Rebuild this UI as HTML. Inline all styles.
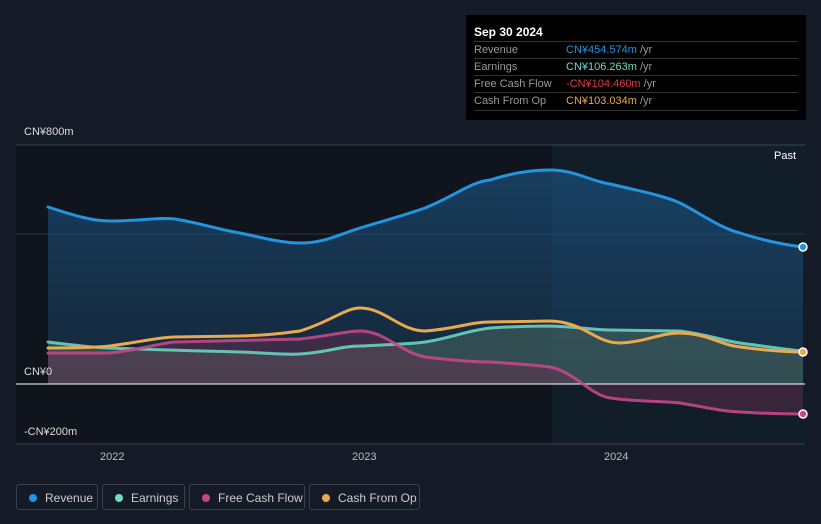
<!DOCTYPE html>
<html><head><style>
body{margin:0;width:821px;height:524px;background:#151b26;font-family:"Liberation Sans",sans-serif;overflow:hidden;position:relative}
.tt{position:absolute;left:466px;top:15px;width:340px;height:105px;background:#000;color:#fff}
.tt .h{position:absolute;left:8px;top:10px;font-size:12px;font-weight:bold}
.row{position:absolute;left:8px;width:324px;height:17px;border-top:1px solid #333;font-size:11px;color:#999;line-height:17px}
.row span{position:absolute;left:92px}
.lg{position:absolute;top:484px;height:26px;border:1px solid #3a404c;border-radius:3px;color:#ccc;font-size:12px;line-height:26px;box-sizing:border-box}
.lg i{position:absolute;left:12px;top:9px;width:8px;height:8px;border-radius:50%}
.lg b{font-weight:normal;position:absolute;left:28px}
.ax{position:absolute;font-size:11px;color:#ddd}
</style></head><body>
<svg width="821" height="524" style="position:absolute;left:0;top:0">
<defs><linearGradient id="g" x1="0" y1="0" x2="0" y2="1"><stop offset="0" stop-color="#1c5a8c" stop-opacity=".6"/><stop offset="1" stop-color="#1c4a70" stop-opacity=".35"/></linearGradient></defs>
<rect x="16" y="145" width="536" height="299" fill="#10141c"/>
<rect x="552" y="145" width="253" height="299" fill="#121d2a"/>
<line x1="16" y1="145" x2="805" y2="145" stroke="#3a4250"/>
<line x1="16" y1="234" x2="805" y2="234" stroke="#2c3442"/>
<line x1="16" y1="444" x2="805" y2="444" stroke="#3a4250"/>
<path d="M48,207 C70,214 90,221 110,221 C140,221 160,217 175,219 C200,223 220,230 240,233 C260,237 280,243 300,243 C325,243 340,234 360,228 C390,219 405,215 425,208 C455,196 470,182 490,180 C515,172 535,170 550,170 C575,170 590,181 610,184 C640,191 665,196 680,203 C700,213 720,228 740,233 C765,241 785,245 803,247 L803,384 L48,384 Z" fill="url(#g)"/>
<path d="M48,342 C80,346 100,348 110,348 C160,350 200,351 240,352 C270,353 285,355 300,354 C330,352 340,346 360,346 C400,344 410,344 425,342 C450,338 470,330 490,328 C520,326 535,326 550,326 C580,327 595,330 610,330 L680,331 C710,335 720,340 740,343 C770,347 790,350 803,351 L803,384 L48,384 Z" fill="#4a6a60" fill-opacity=".55"/>
<path d="M48,353 L110,353 C140,350 160,343 175,342 L300,339 C330,336 345,331 360,331 C385,331 400,352 425,357 C450,360 470,362 490,362 C520,364 535,365 550,367 C575,372 590,395 610,398 C640,402 660,401 680,403 C710,408 720,411 740,412 C770,414 790,414 803,414 L803,384 L48,384 Z" fill="#6a3050" fill-opacity=".45"/>
<line x1="16" y1="384" x2="805" y2="384" stroke="#fff"/>
<g fill="none" stroke-width="3" stroke-linecap="round">
<path d="M48,207 C70,214 90,221 110,221 C140,221 160,217 175,219 C200,223 220,230 240,233 C260,237 280,243 300,243 C325,243 340,234 360,228 C390,219 405,215 425,208 C455,196 470,182 490,180 C515,172 535,170 550,170 C575,170 590,181 610,184 C640,191 665,196 680,203 C700,213 720,228 740,233 C765,241 785,245 803,247" stroke="#2394df"/>
<path d="M48,342 C80,346 100,348 110,348 C160,350 200,351 240,352 C270,353 285,355 300,354 C330,352 340,346 360,346 C400,344 410,344 425,342 C450,338 470,330 490,328 C520,326 535,326 550,326 C580,327 595,330 610,330 L680,331 C710,335 720,340 740,343 C770,347 790,350 803,351" stroke="#6fd9c8" stroke-opacity=".85"/>
<path d="M48,353 L110,353 C140,350 160,343 175,342 L300,339 C330,336 345,331 360,331 C385,331 400,352 425,357 C450,360 470,362 490,362 C520,364 535,365 550,367 C575,372 590,395 610,398 C640,402 660,401 680,403 C710,408 720,411 740,412 C770,414 790,414 803,414" stroke="#c4478a" stroke-opacity=".9"/>
<path d="M48,348 C80,348 100,347 110,346 C140,342 160,337 175,337 L240,336 C270,335 285,333 300,331 C330,322 345,308 360,308 C385,308 400,331 425,331 C455,329 470,322 490,322 L550,321 C585,322 595,343 620,343 C645,342 660,333 680,333 C710,334 720,345 740,347 C770,351 790,352 803,352" stroke="#e8a94f"/>
</g>
<circle cx="803" cy="247" r="4" fill="#2394df" stroke="#fff" stroke-width="1.5"/>
<circle cx="803" cy="352" r="4" fill="#e8a94f" stroke="#fff" stroke-width="1.5"/>
<circle cx="803" cy="414" r="4" fill="#c4478a" stroke="#fff" stroke-width="1.5"/>
</svg>
<div class="ax" style="left:24px;top:126px">CN¥800m</div>
<div class="ax" style="left:24px;top:366px">CN¥0</div>
<div class="ax" style="left:24px;top:426px">-CN¥200m</div>
<div class="ax" style="left:774px;top:150px;color:#fff">Past</div>
<div class="ax" style="left:100px;top:451px;color:#bbb">2022</div>
<div class="ax" style="left:352px;top:451px;color:#bbb">2023</div>
<div class="ax" style="left:604px;top:451px;color:#bbb">2024</div>
<div class="tt"><div class="h">Sep 30 2024</div>
<div class="row" style="top:26px">Revenue<span style="color:#2394df">CN¥454.574m <em style="color:#999;font-style:normal">/yr</em></span></div>
<div class="row" style="top:43px">Earnings<span style="color:#6fd9c8">CN¥106.263m <em style="color:#999;font-style:normal">/yr</em></span></div>
<div class="row" style="top:60px">Free Cash Flow<span style="color:#e03b3b">-CN¥104.460m <em style="color:#999;font-style:normal">/yr</em></span></div>
<div class="row" style="top:77px;border-bottom:1px solid #333">Cash From Op<span style="color:#e8a94f">CN¥103.034m <em style="color:#999;font-style:normal">/yr</em></span></div>
</div>
<div class="lg" style="left:16px;width:82px"><i style="background:#2394df"></i><b>Revenue</b></div>
<div class="lg" style="left:102px;width:83px"><i style="background:#6fd9c8"></i><b>Earnings</b></div>
<div class="lg" style="left:189px;width:116px"><i style="background:#c4478a"></i><b>Free Cash Flow</b></div>
<div class="lg" style="left:309px;width:111px"><i style="background:#e8a94f"></i><b>Cash From Op</b></div>
</body></html>
